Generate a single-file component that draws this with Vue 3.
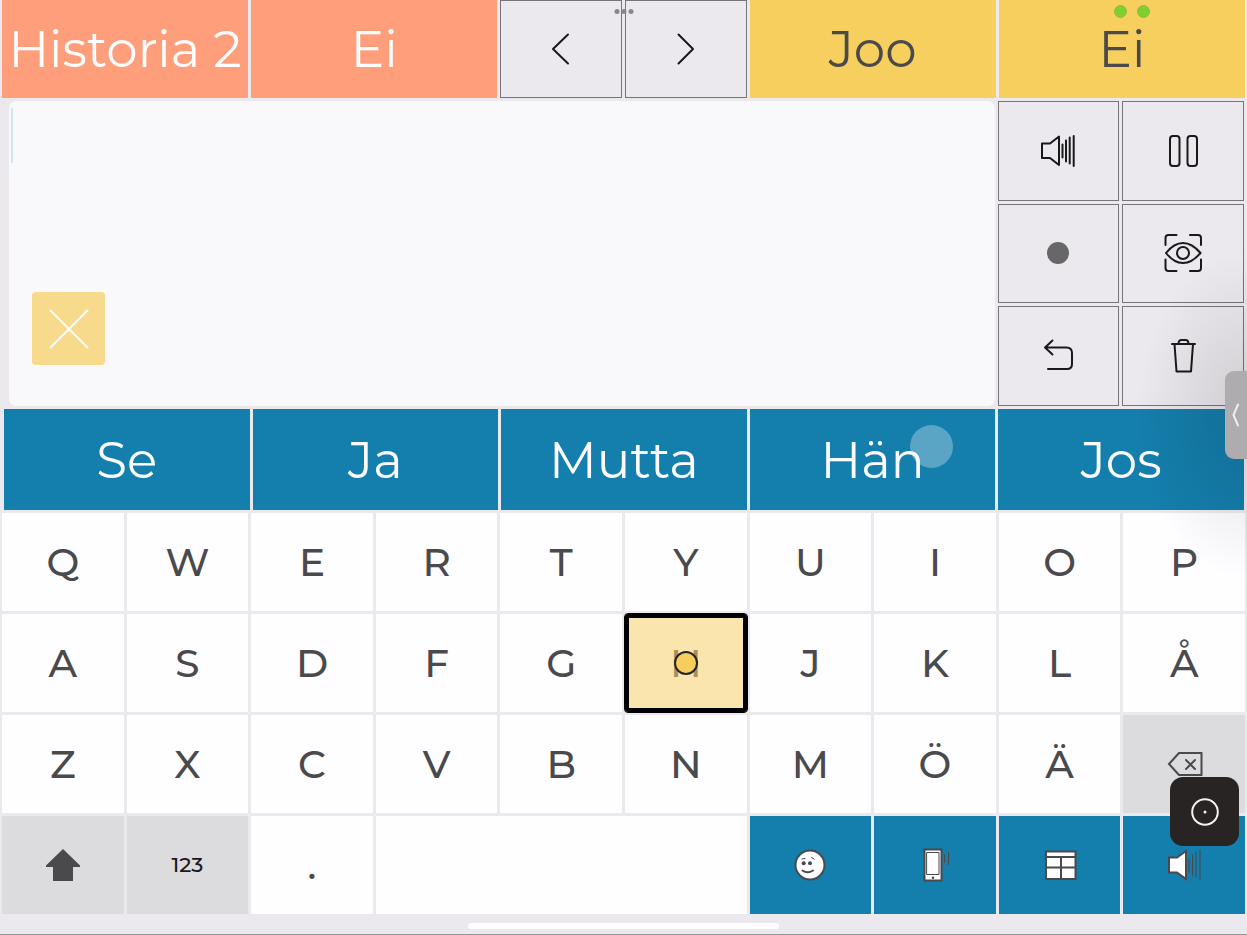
<script setup>
import { ref } from 'vue'

const message = ref('')
const suggestions = ['Se', 'Ja', 'Mutta', 'Hän', 'Jos']
const letters = [...'QWERTYUIOPASDFGHJKLÅZXCVBNMÖÄ']
const focused = 'H'

const tools = [
  {
    name: 'Puhu',
    path: 'M4 12.5h8l9-7V34l-9-7H4zM24.5 13.500v13M28 9.500v21M31.700 6.500v26M35.700 5v30',
  },
  {
    name: 'Tauko',
    path: 'M10 5h3.500q3 0 3 3v24q0 3-3 3H10q-3 0-3-3V8q0-3 3-3zM27.500 5H31q3 0 3 3v24q0 3-3 3h-3.500q-3 0-3-3V8q0-3 3-3z',
  },
  { name: 'Tallenna', dot: true },
  {
    name: 'Katse',
    path: 'M2.500 12V5q0-3 3-3h8M27 2h8q3 0 3 3v7M38 26.500V35q0 3-3 3h-8M13.500 38h-8q-3 0-3-3v-8.500M3 20Q11 10 20 10t17.500 10Q29 30 20 30T3 20zM26 20a6 6 0 1 1-12 0a6 6 0 1 1 12 0',
  },
  {
    name: 'Kumoa',
    path: 'M14.500 4.500L7 11.500l7.500 7M7 11.500h21.500q5.500 0 5.500 5.500v11Q34 33 29 33H10',
  },
  {
    name: 'Tyhjennä',
    path: 'M9 8H32M11.500 8l2 27.500h14.500L30 8M15.500 8q0-4 3-4h4q3 0 3 4',
  },
]
</script>

<template>
  <main class="board">
    <section class="row top">
      <button class="phrase coral">Historia 2</button>
      <button class="phrase coral">Ei</button>
      <button class="tool" aria-label="Edellinen">
        <svg class="icon" viewBox="0 0 40 40"><path d="M27 5.500L12 20l15 14.500" /></svg>
      </button>
      <button class="tool" aria-label="Seuraava">
        <svg class="icon" viewBox="0 0 40 40"><path d="M12.500 5.500L27 20L12.500 34.500" /></svg>
      </button>
      <button class="phrase yellow">Joo</button>
      <button class="phrase yellow">Ei</button>
    </section>

    <section class="middle">
      <div class="message">
        <textarea v-model="message" aria-label="Viesti"></textarea>
        <span class="caret"></span>
        <button class="close" aria-label="Sulje">
          <svg class="icon" viewBox="0 0 40 40"><path d="M1.500 1.500l37 37M38.500 1.500l-37 37" /></svg>
        </button>
      </div>
      <div class="tools">
        <button v-for="tool in tools" :key="tool.name" class="tool" :aria-label="tool.name">
          <svg class="icon" viewBox="0 0 40 40">
            <circle v-if="tool.dot" class="record" cx="20" cy="20" r="11" />
            <path v-else :d="tool.path" />
          </svg>
        </button>
      </div>
    </section>

    <section class="suggestions">
      <button v-for="word in suggestions" :key="word" class="phrase blue">{{ word }}</button>
    </section>

    <section class="row keys">
      <button
        v-for="letter in letters"
        :key="letter"
        class="key"
        :class="{ focused: letter === focused }"
      >
        {{ letter }}
        <span v-if="letter === focused" class="gaze"></span>
      </button>
      <button class="key grey" aria-label="Poista">
        <svg class="icon outline" viewBox="0 0 40 40">
          <path d="M5 20L15 9h22.500v22H15zM22 16l9 9M31 16l-9 9" />
        </svg>
      </button>

      <button class="key grey" aria-label="Vaihto">
        <svg class="icon" viewBox="0 0 40 40">
          <path class="solid" d="M20 4L37 20.500V22h-7v14H10V22H3v-1.500z" />
        </svg>
      </button>
      <button class="key grey digits">123</button>
      <button class="key">.</button>
      <button class="key space" aria-label="Välilyönti"></button>
      <button class="key blue" aria-label="Emojit">
        <svg class="icon filled" viewBox="0 0 40 40">
          <circle cx="20" cy="20" r="14.500" />
          <circle class="mark" cx="13.700" cy="18.300" r="2" />
          <circle class="mark" cx="20" cy="18.300" r="2" />
          <path class="line" d="M12.500 25.500q5 3.500 10.500 0" />
          <path class="line thin" d="M12 14l3-.5M21.500 12.500l2.500 1.500" />
        </svg>
      </button>
      <button class="key blue" aria-label="Puhelin">
        <svg class="icon filled" viewBox="0 0 40 40">
          <path d="M9.500 4.500h17v31h-17z" />
          <path class="thin" d="M12 7.500h12v22H12z" />
          <circle class="mark" cx="18" cy="32.700" r="1.300" />
          <path class="line thin" d="M29.500 10v7.500M33.500 7.500v12" />
        </svg>
      </button>
      <button class="key blue" aria-label="Taulukko">
        <svg class="icon filled" viewBox="0 0 40 40">
          <path d="M6 6.500h29.500V34H6zM6 12h29.500M6 22.500h29.500M21 12v22" />
        </svg>
      </button>
      <button class="key blue" aria-label="Ääni">
        <svg class="icon filled" viewBox="0 0 40 40">
          <path d="M5 12.500h8l9-6.500v28l-9-6.500H5z" />
          <path class="line thin" d="M25 14v13M28.500 10v21M32 7v25M36 5v30" />
        </svg>
      </button>
    </section>

    <footer class="footer"><span class="home"></span></footer>

    <span class="shade"></span>
    <span class="multitask"><i></i><i></i><i></i></span>
    <span class="status"><i></i><i></i></span>
    <span class="touch"></span>
    <button class="drawer" aria-label="Avaa sivupaneeli">
      <svg viewBox="0 0 10 24"><path d="M7 1.500L2.500 12L7 22.500" /></svg>
    </button>
    <button class="assist" aria-label="Apuvalikko">
      <svg viewBox="0 0 30 30">
        <circle cx="15" cy="15" r="12.800" />
        <circle class="pin" cx="15" cy="15" r="1.500" />
      </svg>
    </button>
  </main>
</template>

<style>
body {
  margin: 0;
}
</style>

<style scoped>
.board {
  position: relative;
  box-sizing: border-box;
  display: grid;
  grid-template-rows: 98fr 305fr 101fr 401fr 17px;
  row-gap: 3px;
  min-height: 100vh;
  overflow: hidden;
  background: #ebe9ed;
  border-bottom: 1px solid #96969c;
  font-family: Montserrat, Inter, "Open Sans", sans-serif;
}

button {
  box-sizing: border-box;
  display: flex;
  align-items: center;
  justify-content: center;
  min-width: 0;
  margin: 0;
  padding: 0;
  border: 0;
  font: inherit;
  cursor: pointer;
}

.row {
  display: grid;
  grid-template-columns: repeat(10, minmax(0, 1fr));
  gap: 3px;
  padding: 0 2px;
}

.phrase {
  grid-column: span 2;
  padding-top: 2px;
  font-size: 50px;
  font-weight: 400;
  line-height: 60px;
  white-space: nowrap;
}

.coral {
  background: #ff9e7a;
  color: #fffdfd;
}

.yellow {
  background: #f7cf5e;
  color: #4a494b;
}

.blue {
  background: #147eac;
  color: #fcfcff;
}

.tool {
  background: #ebe9ed;
  border: 1px solid #77757a;
}

.icon {
  width: 40px;
  height: 40px;
  fill: none;
  stroke: #19191b;
  stroke-width: 2;
  stroke-linecap: round;
  stroke-linejoin: round;
}

.record {
  fill: #676668;
  stroke: none;
}

.middle {
  display: grid;
  grid-template-columns: 4fr 1fr;
  gap: 3px;
  padding: 0 3px 0 9px;
}

.message {
  position: relative;
  display: flex;
}

textarea {
  flex: 1;
  box-sizing: border-box;
  min-width: 0;
  padding: 6px;
  border: 0;
  border-radius: 7px;
  outline: 0;
  resize: none;
  background: #f9f8fb;
  color: #4a494b;
  font: inherit;
  font-size: 50px;
  line-height: 56px;
}

.caret {
  position: absolute;
  top: 7px;
  left: 2px;
  width: 2px;
  height: 55px;
  background: #d0e6f0;
}

.close {
  position: absolute;
  bottom: 41px;
  left: 23px;
  width: 73px;
  height: 73px;
  border-radius: 4px;
  background: #f7da8b;
}

.close .icon {
  stroke: #fffdf8;
}

.tools {
  display: grid;
  grid-template-columns: 1fr 1fr;
  grid-auto-rows: 1fr;
  gap: 3px;
}

.suggestions {
  display: grid;
  grid-template-columns: repeat(5, minmax(0, 1fr));
  gap: 3px;
  padding: 0 3px 0 4px;
}

.suggestions .phrase {
  grid-column: auto;
}

.keys {
  grid-auto-rows: 1fr;
}

.key {
  position: relative;
  background: #fefdff;
  color: #4a494b;
  font-size: 39px;
  font-weight: 500;
  line-height: 46px;
}

.key.grey {
  background: #dcdbde;
}

.key.blue {
  background: #147eac;
}

.key.digits {
  color: #19191b;
  font-size: 21px;
  line-height: 24px;
}

.space {
  grid-column: span 3;
}

.focused {
  background: #fbe5ae;
  color: #aa9052;
  border: 4px solid #000000;
  border-radius: 3px;
  outline: 1px solid #000000;
}

.gaze {
  position: absolute;
  top: 50%;
  left: 50%;
  box-sizing: border-box;
  width: 24px;
  height: 24px;
  transform: translate(-50%, -50%);
  border: 2px solid #22262b;
  border-radius: 50%;
  background: #f7cd5b;
}

.outline {
  stroke: #4a494b;
  stroke-linejoin: miter;
}

.solid {
  fill: #4a494b;
  stroke: none;
}

.filled {
  fill: #fefdff;
  stroke: #4a494b;
  stroke-linejoin: miter;
}

.mark {
  fill: #4a494b;
  stroke: none;
}

.line {
  fill: none;
}

.thin {
  stroke-width: 1;
}

.footer {
  display: flex;
  justify-content: center;
  align-items: center;
}

.home {
  width: 25%;
  height: 6px;
  border-radius: 3px;
  background: #fdfcfe;
}

.shade {
  position: absolute;
  top: 250px;
  right: -110px;
  width: 220px;
  height: 330px;
  background: radial-gradient(closest-side, rgba(0, 0, 0, 0.12), rgba(0, 0, 0, 0));
  pointer-events: none;
}

.multitask,
.status {
  position: absolute;
  display: flex;
  pointer-events: none;
}

.multitask {
  top: 9px;
  left: 50%;
  gap: 2px;
  transform: translateX(-50%);
}

.multitask i {
  width: 5px;
  height: 5px;
  border-radius: 50%;
  background: #89878c;
}

.status {
  top: 5px;
  right: 97px;
  gap: 10px;
}

.status i {
  box-sizing: border-box;
  width: 13px;
  height: 13px;
  border: 1px solid #9db344;
  border-radius: 50%;
  background: #7fd02c;
}

.touch {
  position: absolute;
  top: 425px;
  right: 294px;
  width: 43px;
  height: 43px;
  border-radius: 50%;
  background: rgba(255, 255, 255, 0.3);
  pointer-events: none;
}

.drawer {
  position: absolute;
  top: 371px;
  right: 0;
  width: 22px;
  height: 88px;
  border-radius: 9px 0 0 9px;
  background: #aeacaf;
}

.drawer svg {
  width: 10px;
  height: 24px;
  fill: none;
  stroke: #eeedf0;
  stroke-width: 2;
  stroke-linecap: round;
  stroke-linejoin: round;
}

.assist {
  position: absolute;
  right: 8px;
  bottom: 88px;
  width: 69px;
  height: 69px;
  border-radius: 13px;
  background: #272423;
}

.assist svg {
  width: 30px;
  height: 30px;
  fill: none;
  stroke: #f4f2f4;
  stroke-width: 2;
}

.assist .pin {
  fill: #f4f2f4;
  stroke: none;
}
</style>
